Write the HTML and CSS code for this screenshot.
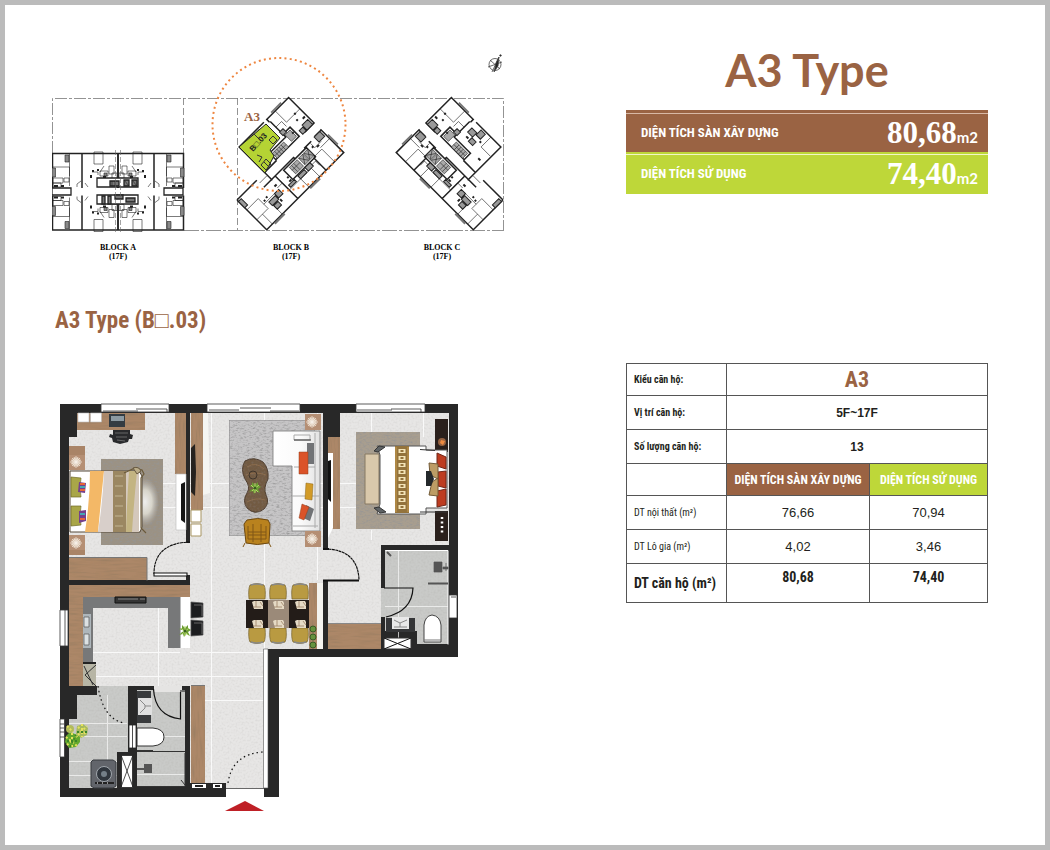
FILE: index.html
```html
<!DOCTYPE html>
<html lang="vi">
<head>
<meta charset="utf-8">
<title>A3 Type</title>
<link rel="stylesheet" href="styles.css">
</head>
<body>
<main class="sheet">
<section class="plans">
<svg class="site-plan" viewBox="52 50 452 215" role="img" aria-label="Block A, B, C">
<defs>
<g id="quad" fill="none" stroke="#222" stroke-width=".6">
<path d="M52.500 188V153.500H118M82 153.500V188M118 153.500V188" stroke-width="1.500"/>
<path d="M69.500 154v32M53 167h16.500v9M94 154v10h9v-12h-9zM53 178h10v5H53zM64 178h5v4h-5zM53 183h8v4H53zM100 171h8v5h-8zM109 166h5v8h-5zM112 173h5v6h-5zM77 187v-3l4-3M88 187l-3-4M92 172h6v3M104 166l-4 6"/>
<path d="M52 168h3.500v9H52zM65 155h4v7h-4zM104 173h3v3h-3z" fill="#888"/>
<path d="M92 171h2M97 170h2M103 177h3M108 181h8M54 186h4M61 186h3M91 175v3" stroke-width="2"/>
</g>
<g id="wing" fill="none" stroke="#222" stroke-width=".6">
<path d="M0 0h28M0 0V42H109V9M39 0v11M39 0V-36H74M78-32V-36H109V0H96M28 10h42l1 8M44 10V42M84 12V42M109 0H100M39 0H56M79-32V-14M84 11H94M100 10H109" stroke-width="1.500"/>
<path d="M56-10h23v-4h10v13H56zM54 12h32v13H54z" fill="#fff" stroke-width="1.500"/>
<path d="M58-8h16v7H58zM58-4.500h16M61-8v7M64-8v7M67-8v7M70-8v7M80-12h7v9h-7zM60 14h11v9H60zM60 18h11M63 14v9M66 14v9M73 14h6v9h-6zM80 14h6v9h-6zM73 14l6 9m0-9l-6 9M80 14l6 9m0-9l-6 9" fill="#aaa"/>
<path d="M0 14h16v14H0M16 22h20M44 30h16v12M60 30h15v12M84 24h12v18M96 22h13M8 28v14M22 28v14M90-36v16h19M79-24h8v7M40-22h13v-14M28 4h10M74 28h9v6M37 20h7v8M92 12v6h9"/>
<path d="M21 24h9v5h-9zM31 22h6v6h-6zM22 30h6v5h-6zM47 26h8v3h-8zM60 26h9v4h-9zM71 25h7v5h-7zM99 10h8v7h-8zM99-7h8v7h-8zM93-5h5v5h-5zM78-18h5v5h-5zM0 2h4v9H0zM59-34h6v7h-6zM66-29h7v6h-7zM60-22h6v5h-6z" fill="#999" stroke-width="1"/>
<path d="M18 20h2M22 19h2M31 30v3M51 20h2M50 24h3M90 16h2M94 19h3M98-14h2M101-20h2M104-11h3M36 17h3M86-8h2M68-19h3M56-25h2M44-12h3" stroke-width="2"/>
<path d="M10 43.500h14M60 43.500h14M110.500 18v14M86-37.500h14" stroke="#777" stroke-width="2"/>
</g>
</defs>
<g fill="none" stroke="#777" stroke-width=".8"><path d="M52.500 153V98.500H503.500V230" stroke-dasharray="12 2 3 2"/><path d="M184 230.500H504" stroke-dasharray="15 2 3 2"/><path d="M183.500 98v55M237.500 98v132" stroke-dasharray="7 3"/></g>
<use href="#quad"/><use href="#quad" transform="matrix(-1 0 0 1 236 0)"/><use href="#quad" transform="matrix(1 0 0 -1 0 383.500)"/><use href="#quad" transform="matrix(-1 0 0 -1 236 383.500)"/>
<g fill="#fff" stroke="#222" stroke-width="1.300"><path d="M97 178h41v9H97zM97 195h41v9H97zM52 188h19v7H52zM164 188h19v7h-19z"/><path d="M110 181h9v5h-9zM124 180h5v6h-5zM132 180h5v6h-5zM102 196h3v8h-3zM108 196h3v8h-3zM115 195h8v4h-8zM126 198h9v4h-9z" fill="#777"/><path d="M112 181v5m3-5v5M124 180l5 6m3-6l5 6" stroke-width=".6"/></g>
<path d="M115.500 150v82M120.500 150v82" stroke="#666" stroke-width=".6" stroke-dasharray="5 2"/>
<use href="#wing" transform="translate(237 200) rotate(-45)"/>
<use href="#wing" transform="matrix(-1 0 0 1 740 0) translate(237 200) rotate(-45)"/>
<path d="M239 147L266 124L280 138L270 150L274 156L265 173Z" fill="#b5d334" stroke="#222"/>
<path d="M261 165l5-6 5 5-5 6zM269 140l4-4 4 4-4 4zM257 155l5 2-3 5M254 134l5 5M264 162l5 5" fill="none" stroke="#333"/>
<text class="map-unit" transform="translate(253 152) rotate(-48)">B□.03</text>
<circle cx="279" cy="124.500" r="66.500" fill="none" stroke="#ee8640" stroke-width="2" stroke-dasharray="2 3.220"/>
<text class="map-type" x="244" y="121">A3</text>
<g class="map-label"><text x="118" y="250">BLOCK A</text><text x="118" y="259">(17F)</text><text x="291" y="250">BLOCK B</text><text x="291" y="259">(17F)</text><text x="442" y="250">BLOCK C</text><text x="442" y="259">(17F)</text></g>
<g fill="none" stroke="#444" stroke-width=".8"><circle cx="495" cy="64.500" r="6"/><path d="M488 67l14-5M490 60l10 9M492 72l7-15"/><path d="M494 72l2-9 3-6-1 9z" fill="#222"/><circle cx="500.500" cy="55.500" r=".8" fill="#222"/></g>
</svg>

<h2 class="plan-title">A3 Type (B□.03)</h2>

<svg class="floor-plan" viewBox="52 400 452 415" role="img" aria-label="A3 floor plan">
<defs>
<filter id="grain" x="0" y="0" width="100%" height="100%"><feTurbulence type="fractalNoise" baseFrequency=".3 .6" numOctaves="3" result="n"/><feColorMatrix in="n" values="0 0 0 0 .3  0 0 0 0 .3  0 0 0 0 .3  0 2 0 0 -.9"/><feComposite in2="SourceGraphic" operator="in" result="g"/><feMerge><feMergeNode in="SourceGraphic"/><feMergeNode in="g"/></feMerge></filter>
<filter id="soft" x="0" y="0" width="100%" height="100%"><feTurbulence type="fractalNoise" baseFrequency=".5" numOctaves="2" result="n"/><feColorMatrix in="n" values="0 0 0 0 .3  0 0 0 0 .28  0 0 0 0 .26  0 .4 0 0 -.17"/><feComposite in2="SourceGraphic" operator="in" result="g"/><feMerge><feMergeNode in="SourceGraphic"/><feMergeNode in="g"/></feMerge></filter>
<filter id="woodv" x="0" y="0" width="100%" height="100%"><feTurbulence type="fractalNoise" baseFrequency=".5 .05" numOctaves="2" result="n"/><feColorMatrix in="n" values="0 0 0 0 .3  0 0 0 0 .2  0 0 0 0 .12  0 1.400 0 0 -.6"/><feComposite in2="SourceGraphic" operator="in" result="g"/><feMerge><feMergeNode in="SourceGraphic"/><feMergeNode in="g"/></feMerge></filter>
<filter id="woodh" x="0" y="0" width="100%" height="100%"><feTurbulence type="fractalNoise" baseFrequency=".05 .5" numOctaves="2" result="n"/><feColorMatrix in="n" values="0 0 0 0 .3  0 0 0 0 .2  0 0 0 0 .12  0 1.400 0 0 -.6"/><feComposite in2="SourceGraphic" operator="in" result="g"/><feMerge><feMergeNode in="SourceGraphic"/><feMergeNode in="g"/></feMerge></filter>
<radialGradient id="glow"><stop offset="0" stop-color="#eee"/><stop offset=".5" stop-color="#dedcd2" stop-opacity=".9"/><stop offset="1" stop-color="#bbb" stop-opacity="0"/></radialGradient>
<linearGradient id="sheen"><stop stop-color="#fff"/><stop offset=".6" stop-color="#fafafa"/><stop offset="1" stop-color="#e2e2e2"/></linearGradient>
<g id="lamp"><rect x="-7" y="-8" width="16" height="16" fill="#b58f74"/><circle r="4.500" fill="#d6bfa9"/><path d="M0-6V6M-6 0H6M-4-4L4 4M4-4L-4 4M-2-5L2 5M2-5L-2 5M-5-2L5 2M-5 2L5-2" stroke="#f6efe6" stroke-width=".7"/></g>
<g id="chair"><path d="M-8 12Q-9 2-7-2Q0-5 7-2Q9 2 8 12Z" fill="#b99a41" stroke="#75622c" stroke-width=".7"/><path d="M-6-2Q0-4 6-2" stroke="#888" fill="none" stroke-width="1.500"/></g>
<g id="plant"><path d="M0 0L-6-2L-3-3L-3-6L0-3L3-6L3-3L6-1L3 1L5 5L1 3L-1 6L-2 3L-6 4L-3 1Z" fill="#6c9d35"/><path d="M-4-3L3 4M4-3L-3 3M0-5V5" stroke="#b4d76a"/><circle r="1.500" fill="#375d1d"/></g>
<g id="plate"><path d="M-6-3l2-1h8l1 2v6h-9z" fill="#e5dac5"/><path d="M-5 2h8M-2-4v6M2-3l3 4" stroke="#9c8266" stroke-width=".8"/></g>
</defs>
<path d="M60 404H458V657H279V797H60Z" fill="#282828"/>
<g fill="#e7e6e5" filter="url(#soft)">
<path d="M77 413H186V580H69V437H77Z"/><path d="M190 413H323V649H268V788H226V783H190V686H69V585H190Z"/><path d="M340 413H449V545H381V649H328V437H340Z"/><path d="M186 543H190V575H186ZM323 549H328V580H323Z"/>
</g>
<g fill="#c9cac8" filter="url(#soft)"><path d="M97 686H128V752H117V788H69V719H77V695H97Z"/><path d="M137 690H185V787H137Z"/><path d="M385 550H448V644H417V631H385V617H381V588H385Z"/></g>
<g stroke="#f9f9f9" stroke-width="1"><path d="M211.500 413V783M264.500 413V649M317.500 413V580M190 483.500H323M190 507.500H323M190 652.500H268M69 652.500H180M69 676.500H264M163 483.500h13M163 507.500h13M340 483.500h20M340 507.500h20M371.500 413v24M423.500 413v24M371.500 530v10M158.500 608v78M205 700.500h59"/><path d="M69 723.500h58M77 736.500h50M69 761.500h48M69 775.500h48M107.500 695v93M137 736.500h48M137 774.500h48M398.500 550v94M385 606.500h63" opacity=".7"/></g>
<!-- windows and openings -->
<g fill="#fff" stroke="#333" stroke-width=".8"><path d="M101 404h68v8h-68zM207 404h93v8h-93zM356 404h69v8h-69zM60 610h8v36h-8zM449 595h8v23h-8zM60 719h4.500v38H60z"/><path d="M226 788.500h38v9h-38z" stroke="none"/><path d="M103 411h35M136 409h31v3M209 410h30M240 408h31M270 411h29M357 410h35M391 409h30v3M65 610v36M451 597h5M60 724h4m-4 4h4m-4 4h4m-4 5h4" fill="none"/></g>
<!-- first bedroom -->
<rect x="101" y="459" width="62" height="86" fill="#9b9284" filter="url(#grain)"/><ellipse cx="145" cy="502" rx="14" ry="24" fill="url(#glow)"/>
<g fill="#ac8767" filter="url(#woodh)"><path d="M77 413h68v17H77zM69 558h78v22H69z"/></g>
<g fill="#ac8767" filter="url(#woodv)"><path d="M175 413h11v61h-11z"/><path d="M191 413h12v97h-12z"/></g>
<path d="M69 557.500h78v23" fill="none" stroke="#777"/>
<path d="M78 413h11v9H78zM90.500 413h11v9h-11zM176 474h10v56h-10z" fill="#fff" stroke="#bbb" stroke-width=".6"/>
<path d="M109 414h16v13h-16z" fill="#343c42"/><path d="M111 416h13v5h-13z" fill="#8c9aa2"/>
<path d="M113 430h17v4l3 1-1 4h-3l-1 3-8 2-7-2-1-4-3-1 1-3 3 1z" fill="#292a2c"/><path d="M115 433h13M116 437h11M117 440l8 1" stroke="#777" stroke-width=".8"/>
<path d="M185 482l-4 2v36l4 3z" fill="#151515"/>
<use href="#lamp" x="76" y="462"/><use href="#lamp" x="76" y="543"/>
<path d="M69 446h16v9H69zM69 550h16v5H69z" fill="#a98467"/>
<g><path d="M70 471H139L142 476V527L140 532H70Z" fill="#fff" stroke="#544838"/><path d="M90 471H104Q101 500 98 532H85Q90 500 90 471Z" fill="#f3b867"/><path d="M104 471h9v61H98Q103 500 104 471Z" fill="#d8cfca"/><path d="M113 471h13v61h-13z" fill="#9b8762"/><path d="M126 471h13v61h-13z" fill="#d4c8bc"/><path d="M129 471h8q-3 30-5 61h-6q1-30 3-61z" fill="#c3b482"/><path d="M115 476h8M115 486h8M115 496h8M115 506h8M115 516h8M115 526h8" stroke="#c1b492"/><path d="M71 477l10 1q-2 9 0 19H71zM71 506h10q-2 10 0 19l-10 1z" fill="#a9a648" stroke="#706b27" stroke-width=".7"/><path d="M79 482l7 1-1 10-7-1zM79 511l7-1v11l-7 2z" fill="#75408b"/><path d="M80 484h5m-5 6h5M80 519h5" stroke="#e66438" stroke-width="2"/><path d="M80 487h5M80 514h5" stroke="#44a7b2" stroke-width="2"/><path d="M124 473l11-5 7 2 2 4-3 4v50l5 5" fill="none" stroke="#6b5a3b" stroke-width="1.200"/><path d="M133 468q6-2 8 3l-4 3z" fill="#bbad89" stroke="#67583f"/></g>
<g fill="none" stroke="#111" stroke-width="1.100"><path d="M190 542Q154 543 154 574" stroke-dasharray="3 .5"/><path d="M154 573h33v3h-33z" fill="#fff"/></g>
<!-- living room -->
<path d="M203 413h5l2 80-7 2z" fill="#f5f5f2"/><path d="M195 444l-4 4v44l4 4 1-24z" fill="#26221f"/><path d="M191 510h10v12h-10zM191 524h10v12h-10z" fill="#fff" stroke="#a89563"/>
<rect x="229" y="420" width="86" height="116" fill="#c6c5c6" stroke="#888" filter="url(#grain)"/>
<g filter="url(#soft)"><path d="M245 461Q254 456 263 462Q269 468 268 479Q263 488 266 495Q270 503 264 509Q255 516 247 508Q242 501 247 493Q251 487 245 479Q240 469 245 461Z" fill="#725a42" stroke="#4e3d2f"/><path d="M247 467q9-6 17 2M246 475q10-4 20 0M247 502q9-5 18-2" fill="none" stroke="#8c6c4c"/></g><circle cx="253" cy="475" r="4" fill="none" stroke="#40352b"/><use href="#plant" x="255" y="488"/>
<path d="M247 520q11-3 21 0l2 4-1 19q-12 3-23 0l-2-19z" fill="#b9821e" stroke="#6d4912"/><path d="M248 526v13h18v-13M248 532h18M248 535h18M253 524v18M261 524v18M245 543l-2 4M269 543l2 4" fill="none" stroke="#805717"/>
<path d="M273 431h47v100H292v-65h-19z" fill="url(#sheen)" stroke="#777" stroke-width=".8"/><path d="M294 435h16v5h-16zM315 433v95M294 467h21M292 496h27M293 526h25" stroke="#aaa" fill="none"/><path d="M294 440h17" stroke="#333"/>
<path d="M307 443h7v21h-7zM306 505l8 4-4 12-7-3z" fill="#717376"/><path d="M299 452h9v22h-9zM302 504l7 3-5 13-5-2z" fill="#db5329" stroke="#93401f" stroke-width=".5"/><path d="M306 483l7 1-1 16-7-1z" fill="#d29b28" stroke="#8c6718" stroke-width=".5"/>
<use href="#lamp" x="312" y="422"/><use href="#lamp" x="312" y="539"/>
<!-- dining table -->
<use href="#chair" x="257" y="587"/><use href="#chair" x="278" y="587"/><use href="#chair" x="300" y="587"/>
<g transform="matrix(1 0 0 -1 0 1227)"><use href="#chair" x="257" y="587"/><use href="#chair" x="278" y="587"/><use href="#chair" x="300" y="587"/></g>
<path d="M246 600h63v28h-63z" fill="#231c18"/><path d="M268 600h21v28h-21z" fill="#9b8a79"/>
<use href="#plate" x="258" y="605"/><use href="#plate" x="279" y="605"/><use href="#plate" x="301" y="605"/><use href="#plate" x="258" y="624"/><use href="#plate" x="279" y="624"/><use href="#plate" x="301" y="624"/>
<path d="M309 583h8v66h-8z" fill="#ac8767" filter="url(#woodv)"/><path d="M317 583h6v66h-6z" fill="#f4f3ef"/><circle cx="313" cy="629" r="3" fill="#65923e" stroke="#385a25"/><circle cx="313" cy="637" r="3" fill="#65923e" stroke="#385a25"/><circle cx="313" cy="645" r="3" fill="#65923e" stroke="#385a25"/>
<!-- kitchen -->
<path d="M69 585H190V597H83V686H69Z" fill="#ac8767" filter="url(#woodh)"/>
<path d="M83 597H181V648H168V608H93V663H83Z" fill="#777879"/><path d="M180.500 597H190V648H180.500Z" fill="#fff"/><path d="M115 597h31v6h-31z" fill="#343434" stroke="#111"/><path d="M118 599h20M140 599h5" stroke="#888"/>
<path d="M83 614h8v34h-8z" fill="#aeb6bb"/><path d="M84 617h5v10h-5zM84 634h5v11h-5z" fill="#dce1e3" stroke="#555" stroke-width=".7"/><path d="M83 664h13v22H83z" fill="#b7b5a5"/><path d="M83 663h13" stroke="#222" stroke-width="2"/><path d="M96 665l-11 10 11 11M84 666l9 19" fill="none" stroke="#333"/>
<use href="#plant" x="185" y="631"/><path d="M191 602l12 1v14l-12 1zM191 620l12 1v14l-12 1z" fill="#1c1d1f" stroke="#555" stroke-width=".7"/><path d="M194 605h8v11M194 623h8v11" fill="none" stroke="#666"/>
<!-- second bedroom -->
<g fill="#ac8767" filter="url(#woodv)"><path d="M328 437h12v92h-12z"/></g><path d="M328 624h53v25h-53z" fill="#ac8767" filter="url(#woodh)"/><path d="M328 453h5v75l-5 10z" fill="#fff"/><path d="M331 460l-3 1v38l3 3z" fill="#111"/><path d="M328 623.500h53" stroke="#888"/>
<rect x="356" y="432" width="64" height="97" fill="#a89e8f" filter="url(#grain)"/><path d="M365 454h14v50h-14z" fill="#d9c8ab" stroke="#867862"/>
<path d="M435 419h13v33h-13zM435 511h13v30h-13z" fill="#2a201c"/><circle cx="442" cy="442" r="4" fill="#956140"/><path d="M441 440l4 1-2 4-3-2z" fill="#ef8b40"/><path d="M442 517v18" stroke="#fff" stroke-width="2.500" stroke-dasharray="2 2.500"/>
<path d="M377 446H426V450H447V508H426V514H377L380 504V455Z" fill="#fff" stroke="#555"/><path d="M374 451l5-5 6 1-7 5zM374 508l6 5 6-1-7-5zM420 449.500l15 1M420 512h27" fill="#5f6365" stroke="#353535"/><path d="M395 446h14v67h-14z" fill="#93733c"/><path d="M402 449v62" stroke="#f3e4b7" stroke-width="7" stroke-dasharray="4 3"/><path d="M402 450v62" stroke="#93733c" stroke-width="3" stroke-dasharray="2 5"/><path d="M396 447v65M408 447v65" stroke="#c89c4d"/>
<path d="M437 453l9 4v12l-9-3zM438 472l8-1v17l-8-2zM437 491l9-2v16l-9 2z" fill="#bd3c20" stroke="#702718"/><path d="M429 463l9 1v15l-8-4zM432 482l6-4v18l-9-1z" fill="#bc9c65" stroke="#735b38"/><path d="M426 471h5l3 8-3 7h-5z" fill="#24282b"/>
<g fill="none" stroke="#111" stroke-width="1.200"><path d="M328 549Q358 551 359 580" stroke-dasharray="3 .5"/><path d="M323 549h6M323 580.500h36" stroke-width="2"/><path d="M384 588h29Q412 611 386 617"/></g>
<!-- ensuite -->
<path d="M385.500 550.500h62.500v94" fill="none" stroke="#fff"/><path d="M387 552l4 4M428 583.500h20" stroke="#555" stroke-width="2"/><path d="M434 562h8v10h-8zM443 567h5v2h-5zM446 563v8" fill="#555" stroke="#555" stroke-width=".7"/>
<path d="M386 618h29v14h-29z" fill="#353638"/><path d="M392 617h17v12h-17z" fill="#e9e9e9"/><path d="M394 620l6 3 7-3M400 623v4M394 627h13" stroke="#888" fill="none"/><path d="M424 642V625q1-9 8-10q8 1 9 10v17z" fill="#fff" stroke="#444"/><path d="M424 640h17" stroke="#777"/>
<path d="M384 638h27v11h-27z" fill="#fff" stroke="#333"/><path d="M384 638l27 11m0-11l-27 11" stroke="#111"/>
<!-- laundry, second bathroom and hall -->
<g fill="#fff" stroke="#222" stroke-width=".8"><path d="M121.500 755.500h11v32h-11zM129 725h7v23h-7z"/><path d="M121 755l12 32m0-32l-12 32M132.500 725v23" fill="none"/></g>
<path d="M91 762l2-2h20l3 2v24l-3 2H94l-3-2z" fill="#62656b" stroke="#373a3f"/><circle cx="104" cy="774" r="7.500" fill="#30363d" stroke="#a0a6ac"/><circle cx="104" cy="774" r="3" fill="#747f88"/><path d="M95 783h19" stroke="#222" stroke-width="2"/><path d="M97 783h1m4 0h1m4 0h1" stroke="#fff"/>
<g><path d="M66 736l4-4 5 2 5 2v6l-4 5-7 1-4-6z" fill="#63a82e"/><path d="M77 726l6-2 5 4-1 7-6 3-5-4z" fill="#a7ba60"/><circle cx="70" cy="729" r="4" fill="#b2bb5c"/><path d="M66 737l11 9M67 745l11-10M72 733v15M78 727l9 8M78 735l9-9M82 724v13M67 726l6 6" stroke="#e5e25c" stroke-width="2" stroke-dasharray="2 2"/><path d="M67 741h12M77 732h11M70 747l6-12" stroke="#3b8529" stroke-width="2" stroke-dasharray="2 2"/></g>
<path d="M137 691h14v32h-14z" fill="#393b3d"/><path d="M138 698h14v17h-14z" fill="#e0e0e0"/><path d="M140 700l5 5v3l-5 5M145 706h6" stroke="#888" fill="none"/><path d="M137 728h16q11 1 11 9t-11 9h-16z" fill="#fff" stroke="#333"/><path d="M137 751.500h48M137 750.500h16" stroke="#333"/><path d="M144 764h8v9h-8zM137 768h7v2h-7z" fill="#555"/><path d="M137 786.500h48V753M181 780l4 5" fill="none" stroke="#333"/>
<path d="M154 686h28v6h-28z" fill="#e5e4e3"/><g fill="none" stroke="#111" stroke-width="1.200"><path d="M180.500 692v27Q155 716 153.500 689M180 691h5"/><path d="M98 686q5 33 26 37M228 783q4-29 35-31" stroke-dasharray="1.500 3"/></g>
<path d="M191 686h14v97h-14z" fill="#ac8767" filter="url(#woodv)"/><path d="M191 685.500h14" stroke="#777"/><path d="M263.500 649h4.500v139h-4.500z" fill="#fff" stroke="#555" stroke-width=".6"/><path d="M192 784h14v4h-14zM213 784h9v4h-9z" fill="#fff"/><path d="M195 786h8M215 786h5" stroke="#222" stroke-width="2"/><path d="M226 788.500h38" stroke="#555" stroke-width=".7"/>
<path d="M245 801L264 811H225Z" fill="#bf2026"/>
</svg>
</section>

<section class="details">
<h1 class="title">A3 Type</h1>
<dl class="areas">
<div class="area area-built"><dt>DIỆN TÍCH SÀN XÂY DỰNG</dt><dd>80,68<span class="unit">m2</span></dd></div>
<div class="area area-usable"><dt>DIỆN TÍCH SỬ DỤNG</dt><dd>74,40<span class="unit">m2</span></dd></div>
</dl>
<table class="specs">
<colgroup><col class="col-label"><col class="col-built"><col class="col-usable"></colgroup>
<tbody>
<tr class="row-s"><th scope="row">Kiểu căn hộ:</th><td colspan="2" class="type">A3</td></tr>
<tr class="row-m"><th scope="row">Vị trí căn hộ:</th><td colspan="2" class="strong">5F~17F</td></tr>
<tr class="row-m"><th scope="row">Số lượng căn hộ:</th><td colspan="2" class="strong">13</td></tr>
<tr class="row-s"><td></td><th scope="col" class="head built">DIỆN TÍCH SÀN XÂY DỰNG</th><th scope="col" class="head usable">DIỆN TÍCH SỬ DỤNG</th></tr>
<tr class="row-m"><th scope="row" class="light">DT nội thất (m²)</th><td>76,66</td><td>70,94</td></tr>
<tr class="row-m"><th scope="row" class="light">DT Lô gia (m²)</th><td>4,02</td><td>3,46</td></tr>
<tr class="row-total"><th scope="row">DT căn hộ (m²)</th><td>80,68</td><td>74,40</td></tr>
</tbody>
</table>
</section>
</main>
</body>
</html>
```
FILE: styles.css
```css
:root {
  --brown: #9a6343;
  --green: #bed739;
  --narrow: "Liberation Sans Narrow", "Roboto Condensed", "Open Sans Condensed", "Liberation Sans", sans-serif;
}

* { box-sizing: border-box; }

body {
  margin: 0;
  background: #fff;
  color: #231f20;
  font-family: "Liberation Sans", sans-serif;
}

.sheet {
  display: grid;
  grid-template-columns: 452fr 362fr;
  column-gap: 122px;
  align-items: start;
  min-height: 100vh;
  padding: 45px 57px 30px 47px;
  border: 5px solid #bbb;
}

.site-plan, .floor-plan { display: block; width: 100%; }

.map-label text { font: bold 8px "Liberation Serif", serif; text-anchor: middle; }
.map-type { font: bold 13px "Liberation Serif", serif; fill: var(--brown); }
.map-unit { font: bold 8px "Liberation Sans", sans-serif; fill: #222; }

.plan-title {
  margin: 42px 0 65px;
  padding-left: 3px;
  color: var(--brown);
  font: bold 23px/28px var(--narrow);
}

.title {
  margin: 0 0 20px;
  color: var(--brown);
  text-align: center;
  font: bold 45px/40px Lato, sans-serif;
}

.areas { margin: 0 0 169px; }

.area {
  display: flex;
  align-items: center;
  justify-content: space-between;
  height: 42px;
  padding: 0 10px 0 15px;
  color: #fff;
}

.area-built { border-top: 3px solid var(--brown); background: var(--brown); box-shadow: inset 0 1px #d8b8a5; }
.area-usable { border-top: 2px solid var(--green); background: var(--green); box-shadow: inset 0 1px #f2f7c8; }
.area dt { font: bold 13px/20px var(--narrow); }
.area dd { margin: 0; font: bold 31px/38px "Liberation Serif", serif; }
.area .unit { font: bold 15px/20px Lato, sans-serif; }

.specs {
  width: 100%;
  border-collapse: collapse;
  table-layout: fixed;
  text-align: center;
  font-size: 13px;
  line-height: 18px;
}

.col-label { width: 100px; }
.col-built { width: 143px; }
.col-usable { width: auto; }

.specs th, .specs td { padding: 0; border: 1px solid #555; white-space: nowrap; }
.specs th[scope="row"] { padding-left: 7px; text-align: left; font: bold 10px/16px var(--narrow); }
.specs th.light { font-weight: normal; }
.specs .type { color: var(--brown); font: bold 22px/24px var(--narrow); }
.specs .strong { font-weight: bold; font-size: 12px; }
.specs .head { color: #fff; font: bold 12px/18px var(--narrow); }
.specs .built { background: var(--brown); }
.specs .usable { background: var(--green); }

.row-s { height: 32px; }
.row-m { height: 34px; }
.row-total { height: 39px; }
.specs .row-total th[scope="row"] { font-size: 14px; }
.specs .row-total td { padding-bottom: 12px; font: bold 14px/18px var(--narrow); }
```
